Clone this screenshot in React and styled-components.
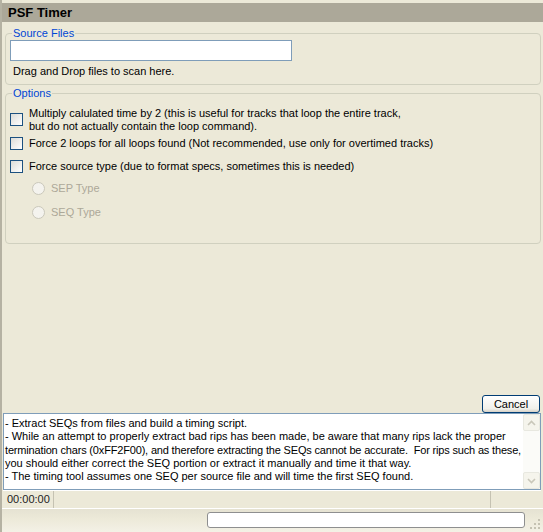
import React from 'react'
import styled, { createGlobalStyle } from 'styled-components'

const Global = createGlobalStyle`
  html, body { margin: 0; padding: 0; background: #ECE9D8; }
  body { font-family: "Liberation Sans", Arial, sans-serif; font-size: 11px; color: #000; }
`

const Window = styled.div`
  width: 543px;
  height: 532px;
  box-sizing: border-box;
  border-left: 2px solid #B5B2A3;
  background: #ECE9D8;
  display: flex;
  flex-direction: column;
  overflow: hidden;
`

const Header = styled.div`
  margin-top: 3px;
  height: 19px;
  background: #ACA899;
  font-size: 13px;
  font-weight: bold;
  line-height: 19px;
  padding-left: 6px;
`

const Body = styled.div`
  padding: 0 2px 0 3px;
  display: flex;
  flex-direction: column;
  gap: 2px;
`

const Group = styled.fieldset`
  margin: ${({ $mt }) => $mt || 0}px 0 0 0;
  border: 1px solid #D0D0BF;
  border-radius: 4px;
  padding: ${({ $pad }) => $pad};
  height: ${({ $h }) => $h}px;
  box-sizing: border-box;
  display: flex;
  flex-direction: column;
  align-items: flex-start;
`

const Legend = styled.legend`
  color: #0046D5;
  padding: 0 1px;
  margin-left: 2px;
  font-size: 11px;
  line-height: 12px;
`

const Input = styled.div`
  width: 280px;
  height: 19px;
  background: #fff;
  border: 1px solid #7F9DB9;
`

const Hint = styled.div`
  margin: 4px 0 0 3px;
`

const CheckRow = styled.div`
  display: flex;
  gap: 6px;
  align-items: flex-start;
  margin-top: ${({ $mt }) => $mt}px;
`

const Box = styled.span`
  flex: none;
  width: 11px;
  height: 11px;
  border: 1px solid #1C5180;
  background: linear-gradient(135deg, #DCDCD7, #FFFFFF);
  margin-top: ${({ $mt }) => $mt || 0}px;
`

const Label = styled.div`
  line-height: 13px;
  color: ${({ $off }) => ($off ? '#ACA899' : '#000')};
`

const RadioRow = styled.div`
  display: flex;
  gap: 6px;
  align-items: center;
  margin: ${({ $mt }) => $mt}px 0 0 22px;
`

const Radio = styled.span`
  width: 11px;
  height: 11px;
  border-radius: 50%;
  border: 1px solid #CAC8BB;
  background: #F4F3EE;
`

const Spacer = styled.div`
  flex: 1;
`

const ButtonRow = styled.div`
  display: flex;
  justify-content: flex-end;
  padding-right: 3px;
`

const Button = styled.div`
  width: 56px;
  height: 16px;
  border: 1px solid #003C74;
  border-radius: 3px;
  background: linear-gradient(#FFFFFF, #F0F0EA 80%, #D6D0C5);
  text-align: center;
  line-height: 16px;
  font-size: 11px;
`

const Log = styled.div`
  margin: 0 2px 0 1px;
  height: 75px;
  background: #fff;
  border: 1px solid #7F9DB9;
  display: flex;
`

const LogText = styled.div`
  flex: 1;
  padding: 3px 0 0 1px;
  line-height: 13.3px;
  white-space: pre;
  overflow: hidden;
`

const LogLine = styled.div`
  letter-spacing: ${({ $tight }) => ($tight ? '-0.17px' : '0')};
`

const Scroll = styled.div`
  width: 17px;
  background: #FBFBF8;
  display: flex;
  flex-direction: column;
  justify-content: space-between;
`

const Arrow = styled.div`
  height: 17px;
  box-sizing: border-box;
  border: 1px solid #E8E8E0;
  border-radius: 2px;
  background: #F5F4EC;
  display: flex;
  align-items: center;
  justify-content: center;
`

const Status = styled.div`
  margin: 0 2px 0 1px;
  height: 17px;
  display: flex;
  border-top: 1px solid #fff;
`

const Pane = styled.div`
  width: ${({ $w }) => $w};
  flex: ${({ $grow }) => ($grow ? 1 : 'none')};
  border-right: ${({ $last }) => ($last ? 'none' : '1px solid #C5C2B2')};
  padding-left: 4px;
  line-height: 17px;
  color: #222;
`

const Bottom = styled.div`
  margin-top: auto;
  height: 23px;
  border-top: 1px solid #fff;
  background: linear-gradient(#E5E2D2, #ECE9D8 40%, #F3F1E6);
  position: relative;
`

const Progress = styled.div`
  position: absolute;
  left: 205px;
  top: 3px;
  width: 316px;
  height: 14px;
  border: 1px solid #8E8F8F;
  border-radius: 3px;
  background: #fff;
`

const Grip = styled.svg`
  position: absolute;
  right: 2px;
  bottom: 2px;
`

const Chevron = ({ up }) => (
  <svg width="9" height="6" viewBox="0 0 9 6">
    <path d={up ? 'M1 5 L4.5 1.5 L8 5' : 'M1 1 L4.5 4.5 L8 1'} fill="none" stroke="#C9C7BA" strokeWidth="1.6" />
  </svg>
)

const logLines = [
  ['- Extract SEQs from files and build a timing script.'],
  ['- While an attempt to properly extract bad rips has been made, be aware that many rips lack the proper'],
  ['termination chars (0xFF2F00), and therefore extracting the SEQs cannot be accurate.  For rips such as these,', true],
  ['you should either correct the SEQ portion or extract it manually and time it that way.'],
  ['- The timing tool assumes one SEQ per source file and will time the first SEQ found.'],
]

export default function App() {
  return (
    <>
      <Global />
      <Window>
        <Header>PSF Timer</Header>
        <Body>
          <Group $h={58} $mt={5} $pad="1px 4px 0 4px">
            <Legend>Source Files</Legend>
            <Input />
            <Hint>Drag and Drop files to scan here.</Hint>
          </Group>
          <Group $h={157} $pad="4px 4px 0 4px">
            <Legend>Options</Legend>
            <CheckRow $mt={4}>
              <Box $mt={6} />
              <Label>
                Multiply calulated time by 2 (this is useful for tracks that loop the entire track,
                <br />
                but do not actually contain the loop command).
              </Label>
            </CheckRow>
            <CheckRow $mt={4}>
              <Box $mt={0} />
              <Label>Force 2 loops for all loops found (Not recommended, use only for overtimed tracks)</Label>
            </CheckRow>
            <CheckRow $mt={10}>
              <Box $mt={0} />
              <Label>Force source type (due to format specs, sometimes this is needed)</Label>
            </CheckRow>
            <RadioRow $mt={9}>
              <Radio />
              <Label $off>SEP Type</Label>
            </RadioRow>
            <RadioRow $mt={11}>
              <Radio />
              <Label $off>SEQ Type</Label>
            </RadioRow>
          </Group>
        </Body>
        <Spacer />
        <ButtonRow>
          <Button>Cancel</Button>
        </ButtonRow>
        <Log>
          <LogText>
            {logLines.map(([l, tight]) => (
              <LogLine key={l} $tight={tight}>{l}</LogLine>
            ))}
          </LogText>
          <Scroll>
            <Arrow><Chevron up /></Arrow>
            <Arrow><Chevron /></Arrow>
          </Scroll>
        </Log>
        <Status>
          <Pane $w="46px">00:00:00</Pane>
          <Pane $grow />
          <Pane $w="46px" $last />
        </Status>
        <Bottom>
          <Progress />
          <Grip width="12" height="12" viewBox="0 0 12 12">
            {[[9, 1], [9, 5], [5, 5], [9, 9], [5, 9], [1, 9]].map(([x, y]) => (
              <rect key={x + '-' + y} x={x} y={y} width="2" height="2" fill="#C5C2B2" />
            ))}
          </Grip>
        </Bottom>
      </Window>
    </>
  )
}
